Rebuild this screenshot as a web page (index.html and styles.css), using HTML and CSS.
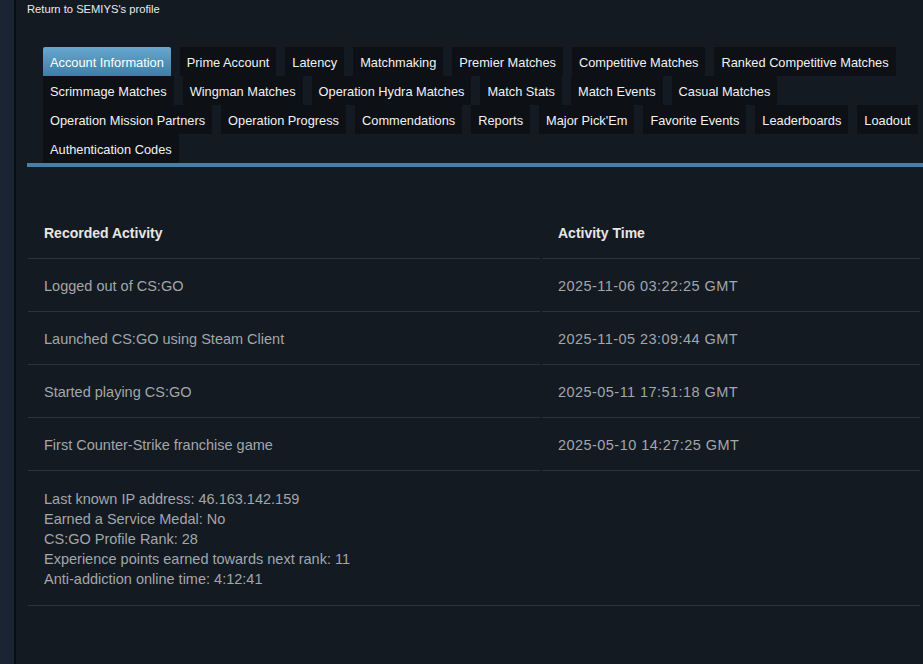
FILE: index.html
```html
<!DOCTYPE html>
<html lang="en">
<head>
    <meta charset="UTF-8">
    <meta name="viewport" content="width=device-width, initial-scale=1.0">
    <title>Personal Game Data</title>
    <link rel="stylesheet" href="styles.css">
</head>
<body>
    <div class="sidebar"></div>
    <div class="main">
        <a class="back-link" href="#">Return to SEMIYS's profile</a>

        <div class="tabs">
            <a class="tab active" href="#">Account Information</a>
            <a class="tab" href="#">Prime Account</a>
            <a class="tab" href="#">Latency</a>
            <a class="tab" href="#">Matchmaking</a>
            <a class="tab" href="#">Premier Matches</a>
            <a class="tab" href="#">Competitive Matches</a>
            <a class="tab" href="#">Ranked Competitive Matches</a>
            <a class="tab" href="#">Scrimmage Matches</a>
            <a class="tab" href="#">Wingman Matches</a>
            <a class="tab" href="#">Operation Hydra Matches</a>
            <a class="tab" href="#">Match Stats</a>
            <a class="tab" href="#">Match Events</a>
            <a class="tab" href="#">Casual Matches</a>
            <a class="tab" href="#">Operation Mission Partners</a>
            <a class="tab" href="#">Operation Progress</a>
            <a class="tab" href="#">Commendations</a>
            <a class="tab" href="#">Reports</a>
            <a class="tab" href="#">Major Pick'Em</a>
            <a class="tab" href="#">Favorite Events</a>
            <a class="tab" href="#">Leaderboards</a>
            <a class="tab" href="#">Loadout</a>
            <a class="tab" href="#">Authentication Codes</a>
        </div>
        <div class="tab-bar"></div>

        <table class="activity">
            <thead>
                <tr>
                    <th>Recorded Activity</th>
                    <th>Activity Time</th>
                </tr>
            </thead>
            <tbody>
                <tr>
                    <td>Logged out of CS:GO</td>
                    <td class="time">2025-11-06 03:22:25 GMT</td>
                </tr>
                <tr>
                    <td>Launched CS:GO using Steam Client</td>
                    <td class="time">2025-11-05 23:09:44 GMT</td>
                </tr>
                <tr>
                    <td>Started playing CS:GO</td>
                    <td class="time">2025-05-11 17:51:18 GMT</td>
                </tr>
                <tr>
                    <td>First Counter-Strike franchise game</td>
                    <td class="time">2025-05-10 14:27:25 GMT</td>
                </tr>
                <tr>
                    <td class="summary" colspan="2">
                        Last known IP address: 46.163.142.159<br>
                        Earned a Service Medal: No<br>
                        CS:GO Profile Rank: 28<br>
                        Experience points earned towards next rank: 11<br>
                        Anti-addiction online time: 4:12:41
                    </td>
                </tr>
            </tbody>
        </table>
    </div>
</body>
</html>
```

FILE: styles.css
```css
* {
    margin: 0;
    padding: 0;
    box-sizing: border-box;
}

body {
    display: flex;
    min-height: 100vh;
    background: #131a22;
    font-family: 'Liberation Sans', Arial, sans-serif;
    overflow: hidden;
}

.sidebar {
    width: 16px;
    flex-shrink: 0;
    background: #1b2433;
    border-right: 2px solid #0a0d12;
}

.main {
    flex: 1;
    padding-left: 11px;
}

.back-link {
    display: block;
    padding-top: 3px;
    color: #ebebeb;
    font-size: 11.2px;
    line-height: 13px;
    text-decoration: none;
}

.tabs {
    display: flex;
    flex-wrap: wrap;
    column-gap: 9px;
    margin-top: 31px;
    padding-left: 16px;
}

.tab {
    display: block;
    height: 29px;
    padding: 3px 7px 0;
    line-height: 26px;
    background: #0d1015;
    color: #f2f2f2;
    font-size: 12.8px;
    text-decoration: none;
    white-space: nowrap;
}

.tab.active {
    background: linear-gradient(180deg, #68a8cf, #3d7ea7);
    border-radius: 2px 2px 0 0;
    color: #fff;
}

.tab-bar {
    height: 4px;
    background: #4a7fa1;
}

.activity {
    width: 100%;
    margin-top: 39px;
    border-collapse: separate;
    border-spacing: 2px 0;
    margin-left: -1px;
    font-size: 14.5px;
}

.activity th,
.activity td {
    height: 53px;
    padding: 1px 16px 0;
    text-align: left;
    vertical-align: middle;
    border-bottom: 1px solid #29323d;
}

.activity th {
    width: 512px;
    color: #e6e6e6;
    font-size: 14px;
    font-weight: bold;
}

.activity th + th {
    width: auto;
}

.activity td {
    color: #a3a6aa;
}

.activity td.time {
    letter-spacing: 0.45px;
}

.activity td.summary {
    height: auto;
    padding: 18px 16px 16px;
    line-height: 20px;
}
```
